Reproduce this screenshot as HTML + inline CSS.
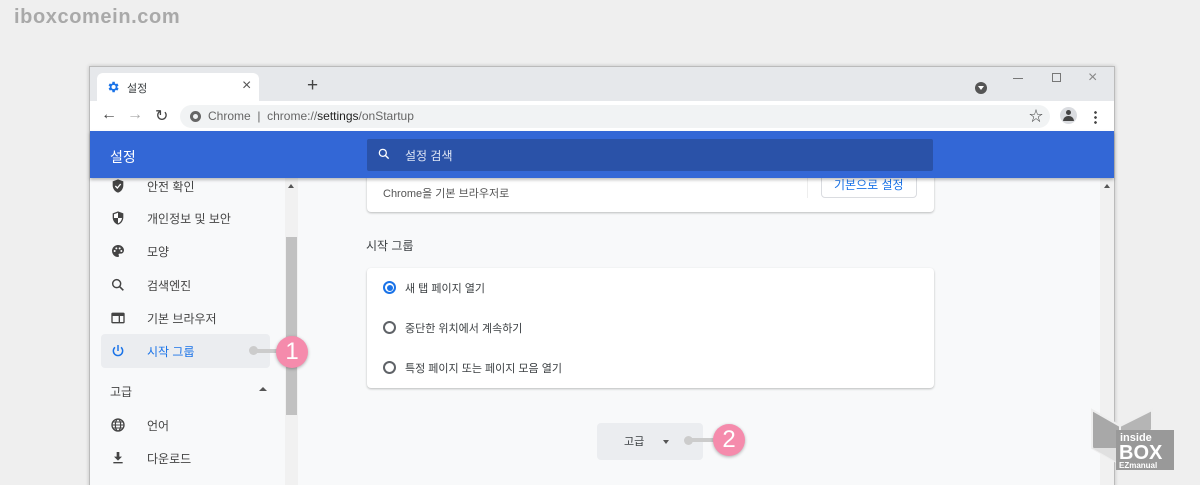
<!DOCTYPE html>
<html style="width:1200px;height:485px;overflow:hidden"><head><meta charset="utf-8"><style>
*{margin:0;padding:0;box-sizing:border-box}
body{width:1200px;height:485px;background:#efefef;font-family:"Liberation Sans","Noto Sans CJK KR",sans-serif;position:relative;overflow:hidden;color:#333}
.a{position:absolute}
.t{font-size:12px;color:#3c4043;white-space:nowrap}
.si{position:absolute;left:110px;width:16px;height:16px}
.sl{position:absolute;left:147px;font-size:12px;color:#444;white-space:nowrap}
.radio{position:absolute;left:383px;width:13px;height:13px;border:2px solid #5f6368;border-radius:50%}
.badge{position:absolute;width:32px;height:32px;border-radius:50%;background:#f58bac;color:#fff;font-size:24px;text-align:center;line-height:32px;box-shadow:0 1px 3px rgba(0,0,0,.3)}
</style></head><body>
<div class="a" style="left:14px;top:6px;font-size:20px;font-weight:bold;color:#a9a9a9;letter-spacing:0.6px">iboxcomein.com</div>

<div class="a" style="left:89px;top:66px;width:1026px;height:440px;background:#f8f9fa;border:1px solid #bbb;box-shadow:0 0 4px rgba(0,0,0,.2)">
</div>
<!-- tab strip -->
<div class="a" style="left:90px;top:67px;width:1024px;height:34px;background:#e6e8eb"></div>
<div class="a" style="left:97px;top:73px;width:162px;height:28px;background:#fff;border-radius:6px 6px 0 0"></div>
<svg class="a" style="left:106px;top:80px" width="14" height="14" viewBox="0 0 24 24"><path fill="#1a73e8" d="M19.4 13a7.5 7.5 0 000-2l2.1-1.6-2-3.5-2.5 1a7.6 7.6 0 00-1.7-1L15 3h-4l-.4 2.9a7.6 7.6 0 00-1.7 1l-2.5-1-2 3.5L6.6 11a7.5 7.5 0 000 2l-2.1 1.6 2 3.5 2.5-1a7.6 7.6 0 001.7 1L11 21h4l.4-2.9a7.6 7.6 0 001.7-1l2.5 1 2-3.5zM13 15.5a3.5 3.5 0 110-7 3.5 3.5 0 010 7z"/></svg>
<div class="a t" style="left:127px;top:80px;font-size:11px">설정</div>
<div class="a" style="left:242px;top:77px;font-size:16px;color:#555">×</div>
<div class="a" style="left:307px;top:75px;font-size:19px;color:#444">+</div>
<div class="a" style="left:975px;top:82px;width:12px;height:12px;border-radius:50%;background:#555"></div>
<div class="a" style="left:978px;top:86px;width:0;height:0;border-left:3px solid transparent;border-right:3px solid transparent;border-top:4px solid #fff"></div>
<div class="a" style="left:1013px;top:78px;width:10px;height:1px;background:#777"></div>
<div class="a" style="left:1052px;top:73px;width:9px;height:9px;border:1px solid #777"></div>
<div class="a" style="left:1088px;top:69px;font-size:16px;color:#888">×</div>
<!-- toolbar -->
<div class="a" style="left:90px;top:101px;width:1024px;height:30px;background:#fff"></div>
<div class="a" style="left:101px;top:106px;font-size:16px;color:#444">←</div>
<div class="a" style="left:127px;top:106px;font-size:16px;color:#aaa">→</div>
<div class="a" style="left:155px;top:106px;font-size:16px;color:#444">↻</div>
<div class="a" style="left:180px;top:105px;width:870px;height:23px;background:#f1f3f4;border-radius:12px"></div>
<div class="a" style="left:190px;top:111px;width:11px;height:11px;border-radius:50%;background:#666"></div>
<div class="a" style="left:193px;top:114px;width:5px;height:5px;border-radius:50%;background:#f1f3f4"></div>
<div class="a t" style="left:208px;top:109px;font-size:12px;color:#666">Chrome &nbsp;|&nbsp; chrome://<span style="color:#222">settings</span>/onStartup</div>
<div class="a" style="left:1029px;top:106px;font-size:14px;color:#444">☆</div>
<div class="a" style="left:1060px;top:107px;width:17px;height:17px;border-radius:50%;background:#dadce0"></div>
<div class="a" style="left:1066px;top:110px;width:5px;height:5px;border-radius:50%;background:#444"></div>
<div class="a" style="left:1063px;top:116px;width:11px;height:5px;border-radius:5px 5px 0 0;background:#444"></div>
<div class="a" style="left:1094px;top:110px;width:3px;height:14px;background:radial-gradient(circle,#444 1.2px,transparent 1.5px) 0 0/3px 5px"></div>
<!-- blue header -->
<div class="a" style="left:90px;top:131px;width:1024px;height:47px;background:#3367d6;box-shadow:0 2px 3px rgba(0,0,0,.25);z-index:5"></div>
<div class="a" style="left:110px;top:147px;font-size:14px;color:#fff;z-index:6">설정</div>
<div class="a" style="left:367px;top:139px;width:566px;height:32px;background:#2a52a8;border-radius:2px;z-index:6"></div>
<svg class="a" style="left:377px;top:147px;z-index:7" width="14" height="14" viewBox="0 0 24 24"><circle cx="10" cy="10" r="6" fill="none" stroke="#fff" stroke-width="2.2"/><path d="M14.5 14.5L20 20" stroke="#fff" stroke-width="2.4"/></svg>
<div class="a" style="left:405px;top:147px;font-size:12px;color:#dfe6f5;z-index:7">설정 검색</div>
<!-- sidebar -->
<div class="a" style="left:90px;top:178px;width:208px;height:320px;background:#f8f9fa"></div>
<div class="a" style="left:285px;top:178px;width:13px;height:320px;background:#f1f1f1"></div>
<div class="a" style="left:286px;top:237px;width:11px;height:178px;background:#c1c1c1"></div>
<div class="a" style="left:288px;top:184px;border-left:3px solid transparent;border-right:3px solid transparent;border-bottom:4px solid #555"></div>
<div class="a" style="left:101px;top:334px;width:169px;height:34px;background:#ebedf0;border-radius:4px"></div>
<svg class="si" style="top:178px" viewBox="0 0 24 24"><path fill="#444" d="M12 2L4 5v6c0 5 3.4 9.7 8 11 4.6-1.3 8-6 8-11V5z"/><path d="M8 12l3 3 5-6" stroke="#fff" stroke-width="2" fill="none"/></svg>
<div class="sl" style="top:178px">안전 확인</div>
<svg class="si" style="top:210px" viewBox="0 0 24 24"><path fill="#444" d="M12 2L4 5v6c0 5 3.4 9.7 8 11 4.6-1.3 8-6 8-11V5z"/><path fill="#fff" d="M12 4.2V12H6V6.4zM12 12h6c-.5 3.8-3 7-6 8z"/></svg>
<div class="sl" style="top:210px">개인정보 및 보안</div>
<svg class="si" style="top:243px" viewBox="0 0 24 24"><path fill="#444" d="M12 3a9 9 0 000 18c1 0 1.5-.7 1.5-1.5 0-.9-.7-1.2-.7-2s.6-1.5 1.5-1.5H16a5 5 0 005-5c0-4.4-4-8-9-8z"/><circle cx="7" cy="12" r="1.5" fill="#fff"/><circle cx="9.5" cy="8" r="1.5" fill="#fff"/><circle cx="14.5" cy="8" r="1.5" fill="#fff"/><circle cx="17" cy="12" r="1.5" fill="#fff"/></svg>
<div class="sl" style="top:243px">모양</div>
<svg class="si" style="top:277px" viewBox="0 0 24 24"><circle cx="10" cy="10" r="6" fill="none" stroke="#444" stroke-width="2.2"/><path d="M14.5 14.5L20 20" stroke="#444" stroke-width="2.4"/></svg>
<div class="sl" style="top:277px">검색엔진</div>
<svg class="si" style="top:310px" viewBox="0 0 24 24"><rect x="3" y="5" width="18" height="14" rx="1" fill="none" stroke="#444" stroke-width="2"/><rect x="3" y="5" width="18" height="4" fill="#444"/><path d="M14 9v10" stroke="#444" stroke-width="2"/></svg>
<div class="sl" style="top:310px">기본 브라우저</div>
<svg class="si" style="top:343px" viewBox="0 0 24 24"><path d="M12 3v9" stroke="#1a73e8" stroke-width="2.2"/><path d="M7.5 6.5a7 7 0 109 0" fill="none" stroke="#1a73e8" stroke-width="2.2"/></svg>
<div class="sl" style="top:343px;color:#1a73e8">시작 그룹</div>
<div class="a" style="left:250px;top:349px;width:30px;height:4px;background:#ccc"></div>
<div class="a" style="left:249px;top:346px;width:9px;height:9px;border-radius:50%;background:#ccc"></div>
<div class="badge" style="left:276px;top:336px">1</div>
<div class="sl" style="left:110px;top:383px">고급</div>
<div class="a" style="left:259px;top:387px;border-left:4px solid transparent;border-right:4px solid transparent;border-bottom:4px solid #555"></div>
<svg class="si" style="top:417px" viewBox="0 0 24 24"><circle cx="12" cy="12" r="9" fill="none" stroke="#444" stroke-width="2"/><ellipse cx="12" cy="12" rx="4" ry="9" fill="none" stroke="#444" stroke-width="1.8"/><path d="M3 12h18M4.5 7.5h15M4.5 16.5h15" stroke="#444" stroke-width="1.6"/></svg>
<div class="sl" style="top:417px">언어</div>
<svg class="si" style="top:450px" viewBox="0 0 24 24"><path fill="#444" d="M10 3h4v7h4l-6 6-6-6h4zM5 18h14v2H5z"/></svg>
<div class="sl" style="top:450px">다운로드</div>
<!-- content -->
<div class="a" style="left:1100px;top:178px;width:14px;height:320px;background:#f1f1f1"></div>
<div class="a" style="left:1104px;top:184px;border-left:3px solid transparent;border-right:3px solid transparent;border-bottom:4px solid #555"></div>
<div class="a" style="left:367px;top:160px;width:567px;height:52px;background:#fff;border-radius:4px;box-shadow:0 1px 2px rgba(0,0,0,.25)"></div>
<div class="a t" style="left:383px;top:185px;font-size:11px;color:#555">Chrome을 기본 브라우저로</div>
<div class="a" style="left:807px;top:178px;width:1px;height:20px;background:#eee"></div>
<div class="a" style="left:821px;top:165px;width:96px;height:33px;border:1px solid #dadce0;border-radius:4px"></div>
<div class="a" style="left:834px;top:176px;font-size:12px;color:#1a73e8">기본으로 설정</div>
<div class="a t" style="left:366px;top:237px;font-size:12px">시작 그룹</div>
<div class="a" style="left:367px;top:268px;width:567px;height:120px;background:#fff;border-radius:4px;box-shadow:0 1px 2px rgba(0,0,0,.25)"></div>
<div class="radio" style="top:281px;border-color:#1a73e8"></div>
<div class="a" style="left:386.5px;top:284.5px;width:6px;height:6px;border-radius:50%;background:#1a73e8"></div>
<div class="a t" style="left:405px;top:280px;font-size:11px">새 탭 페이지 열기</div>
<div class="radio" style="top:321px"></div>
<div class="a t" style="left:405px;top:320px;font-size:11px">중단한 위치에서 계속하기</div>
<div class="radio" style="top:361px"></div>
<div class="a t" style="left:405px;top:360px;font-size:11px">특정 페이지 또는 페이지 모음 열기</div>
<div class="a" style="left:597px;top:423px;width:106px;height:37px;background:#ebedf0;border-radius:4px"></div>
<div class="a t" style="left:624px;top:433px;font-size:11px">고급</div>
<div class="a" style="left:663px;top:440px;border-left:3px solid transparent;border-right:3px solid transparent;border-top:4px solid #555"></div>
<div class="a" style="left:688px;top:438px;width:28px;height:4px;background:#ccc"></div>
<div class="a" style="left:684px;top:436px;width:9px;height:9px;border-radius:50%;background:#ccc"></div>
<div class="badge" style="left:713px;top:424px">2</div>
<!-- logo -->
<svg class="a" style="left:1090px;top:408px" width="100" height="62" viewBox="0 0 100 62">
<path d="M2 2L30 18V56L2 40Z" fill="#a8a8a8" stroke="#eee" stroke-width="2"/>
<path d="M30 18L62 2V22L30 40Z" fill="#b5b5b5" stroke="#eee" stroke-width="2"/>
<path d="M2 40L30 56V40Z" fill="#e0e0e0"/>
<rect x="26" y="22" width="58" height="40" fill="#999"/>
<text x="30" y="33" font-family="Liberation Sans" font-weight="bold" font-size="11" fill="#fff">inside</text>
<text x="29" y="51" font-family="Liberation Sans" font-weight="bold" font-size="20" fill="#fff">BOX</text>
<text x="29" y="60" font-family="Liberation Sans" font-weight="bold" font-size="8" fill="#fff">EZmanual</text>
</svg>
</body></html>
